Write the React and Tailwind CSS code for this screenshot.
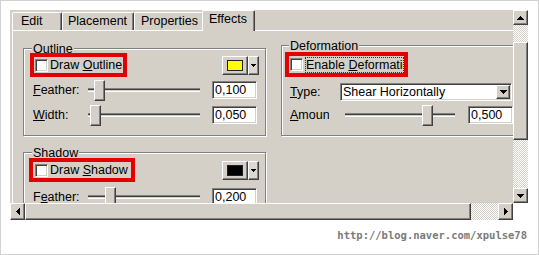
import React from "react";

const raised =
  "border border-t-white border-l-white border-r-[#404040] border-b-[#404040] shadow-[inset_-1px_-1px_0_#808080]";
const sunken =
  "border border-t-[#808080] border-l-[#808080] border-r-white border-b-white shadow-[inset_1px_1px_0_#404040,inset_-1px_-1px_0_#d4d0c8]";
const checker =
  "bg-[image:repeating-conic-gradient(#ffffff_0%_25%,#d4d0c8_0%_50%)] bg-[length:2px_2px]";

function Arrow({ dir, small }) {
  const pts = {
    up: "3.5,0 7,4 0,4",
    down: "0,0 7,0 3.5,4",
    left: "4,0 4,7 0,3.5",
    right: "0,0 0,7 4,3.5",
  }[dir];
  const vertical = dir === "up" || dir === "down";
  const w = vertical ? 7 : 4;
  const h = vertical ? 4 : 7;
  return (
    <svg
      width={small ? 5 : w}
      height={small ? 3 : h}
      viewBox={`0 0 ${w} ${h}`}
      preserveAspectRatio="none"
      shapeRendering="crispEdges"
    >
      <polygon points={pts} fill="#000" />
    </svg>
  );
}

function Check() {
  return <span className={`block w-[13px] h-[13px] shrink-0 bg-white ${sunken}`} />;
}

function Field({ children, className = "" }) {
  return (
    <div className={`w-[45px] h-[18px] shrink-0 bg-white pl-[2px] pt-[1px] leading-[14px] ${sunken} ${className}`}>
      {children}
    </div>
  );
}

function Slider({ left, right }) {
  const track =
    "h-[4px] border-t border-t-[#808080] border-b border-b-white bg-[#d4d0c8] shadow-[inset_0_1px_0_#404040]";
  return (
    <div className="flex items-center h-[22px] shrink-0">
      <div className={`${track} ${left}`} />
      <div className={`w-[11px] h-[21px] bg-[#d4d0c8] ${raised}`} />
      <div className={`${track} ${right}`} />
    </div>
  );
}

function ColorButton({ swatch }) {
  return (
    <div className="flex h-[19px]">
      <div className={`w-[26px] flex items-center justify-center bg-[#d4d0c8] ${raised}`}>
        <div className={`w-[16px] h-[11px] border border-[#202020] ${swatch}`} />
      </div>
      <div className={`w-[11px] flex items-center justify-center bg-[#dcd9d3] ${raised}`}>
        <Arrow dir="down" small />
      </div>
    </div>
  );
}

function Group({ title, labelClass, className, children }) {
  return (
    <div className={`border border-[#808080] shadow-[inset_1px_1px_0_#ffffff,1px_1px_0_#ffffff] ${className}`}>
      <div className={`-mt-[7px] w-fit h-[14px] px-[1px] bg-[#d4d0c8] ${labelClass}`}>{title}</div>
      {children}
    </div>
  );
}

function Tab({ children, className }) {
  return (
    <div
      className={`h-[18px] pt-[1px] whitespace-nowrap border-t border-l border-r border-t-white border-l-white border-r-[#404040] rounded-t-[2px] shadow-[inset_-1px_0_0_#808080] ${className}`}
    >
      {children}
    </div>
  );
}

export default function App() {
  return (
    <div className="w-[539px] h-[255px] bg-white border border-[#d2d2d2] pl-[9px] pt-[9px] font-['Liberation_Sans',Arial,sans-serif] text-[12.5px] leading-[14px] text-black">
      <div className="flex">
        <div className="w-[503px] h-[193px] overflow-hidden bg-[#d4d0c8]">
          {/* tabs */}
          <div className="flex items-end h-[20px] pl-[2px]">
            <Tab className="w-[50px] pl-[8px]">Edit</Tab>
            <Tab className="w-[72px] pl-[5px]">Placement</Tab>
            <Tab className="w-[70px] pl-[6px]">Properties</Tab>
            <Tab className="relative z-10 -ml-[2px] -mb-px !h-[21px] w-[53px] pl-[6px] bg-[#d4d0c8]">Effects</Tab>
          </div>

          {/* tab page */}
          <div className="ml-[2px] w-[520px] h-[180px] border-t border-l border-white flex items-start">
            <div className="ml-[10px] mt-[17px] flex flex-col gap-[16px]">
              <Group title="Outline" labelClass="ml-[8px]" className="w-[243px] h-[88px]">
                <div className="flex items-center justify-between -mt-[3px] pl-[6px] pr-[6px]">
                  <div className="flex items-center w-[97px] h-[24px] border-4 border-[#e40000] pl-[1px]">
                    <Check />
                    <span className="ml-[2px] whitespace-nowrap">
                      Draw <u>O</u>utline
                    </span>
                  </div>
                  <ColorButton swatch="bg-[#ffff00]" />
                </div>
                <div className="flex items-center h-[22px] mt-[2px] pl-[9px]">
                  <span className="w-[55px] shrink-0">
                    <u>F</u>eather:
                  </span>
                  <Slider left="w-[6px]" right="w-[95px]" />
                  <Field className="ml-[12px]">0,100</Field>
                </div>
                <div className="flex items-center h-[22px] mt-[3px] pl-[9px]">
                  <span className="w-[55px] shrink-0">
                    <u>W</u>idth:
                  </span>
                  <Slider left="w-[2px]" right="w-[99px]" />
                  <Field className="ml-[12px]">0,050</Field>
                </div>
              </Group>

              <Group title="Shadow" labelClass="ml-[8px]" className="w-[243px] h-[70px]">
                <div className="flex items-center justify-between -mt-[2px] pl-[5px] pr-[6px]">
                  <div className="flex items-center w-[106px] h-[24px] border-4 border-[#e40000] pl-[2px]">
                    <Check />
                    <span className="ml-[2px] whitespace-nowrap">
                      Draw <u>S</u>hadow
                    </span>
                  </div>
                  <ColorButton swatch="bg-black" />
                </div>
                <div className="flex items-center h-[22px] mt-[4px] pl-[9px]">
                  <span className="w-[55px] shrink-0">
                    F<u>e</u>ather:
                  </span>
                  <Slider left="w-[17px]" right="w-[84px]" />
                  <Field className="ml-[12px]">0,200</Field>
                </div>
              </Group>
            </div>

            <div className="ml-[15px] mt-[14px]">
              <Group title="Deformation" labelClass="ml-[7px]" className="w-[240px] h-[91px]">
                <div className="-mt-[1px] ml-[3px] flex items-center w-[123px] h-[25px] border-4 border-[#e40000] pl-[1px]">
                  <Check />
                  <span className="ml-[2px] w-[99px] h-[16px] shrink-0 overflow-hidden whitespace-nowrap border border-dotted border-[#333] leading-[14px]">
                    Enable <u>D</u>eformation
                  </span>
                </div>
                <div className="flex items-center h-[21px] mt-[4px] pl-[8px]">
                  <span className="w-[50px] shrink-0">
                    <u>T</u>ype:
                  </span>
                  <div className={`w-[172px] h-[18px] shrink-0 flex items-center justify-between bg-white pl-[2px] pr-px ${sunken}`}>
                    <span className="whitespace-nowrap">Shear Horizontally</span>
                    <div className={`w-[14px] h-[14px] flex items-center justify-center bg-[#d4d0c8] ${raised}`}>
                      <Arrow dir="down" />
                    </div>
                  </div>
                </div>
                <div className="flex items-center h-[22px] mt-[2px] pl-[8px]">
                  <span className="w-[39px] shrink-0 overflow-hidden whitespace-nowrap">
                    <u>A</u>mount:
                  </span>
                  <div className="ml-[16px]">
                    <Slider left="w-[77px]" right="w-[22px]" />
                  </div>
                  <Field className="ml-[13px]">0,500</Field>
                </div>
              </Group>
            </div>
          </div>
        </div>

        {/* vertical scrollbar */}
        <div className="w-[15px] h-[193px] flex flex-col">
          <div className={`h-[15px] flex items-center justify-center bg-[#d4d0c8] ${raised}`}>
            <Arrow dir="up" />
          </div>
          <div className={`h-[17px] ${checker}`} />
          <div className={`h-[98px] bg-[#d4d0c8] ${raised}`} />
          <div className={`flex-1 ${checker}`} />
          <div className={`h-[15px] flex items-center justify-center bg-[#d4d0c8] ${raised}`}>
            <Arrow dir="down" />
          </div>
        </div>
      </div>

      {/* horizontal scrollbar */}
      <div className="flex w-[503px] h-[17px]">
        <div className={`w-[15px] flex items-center justify-center bg-[#d4d0c8] ${raised}`}>
          <Arrow dir="left" />
        </div>
        <div className={`w-[446px] bg-[#d4d0c8] ${raised}`} />
        <div className={`w-[27px] ${checker}`} />
        <div className={`w-[15px] flex items-center justify-center bg-[#d4d0c8] ${raised}`}>
          <Arrow dir="right" />
        </div>
      </div>

      <div className="w-[518px] mt-[9px] pr-[1px] text-right font-['DejaVu_Sans_Mono',monospace] font-bold text-[10.5px] leading-[12px] text-[#7b7b7b]">
        http://blog.naver.com/xpulse78
      </div>
    </div>
  );
}
